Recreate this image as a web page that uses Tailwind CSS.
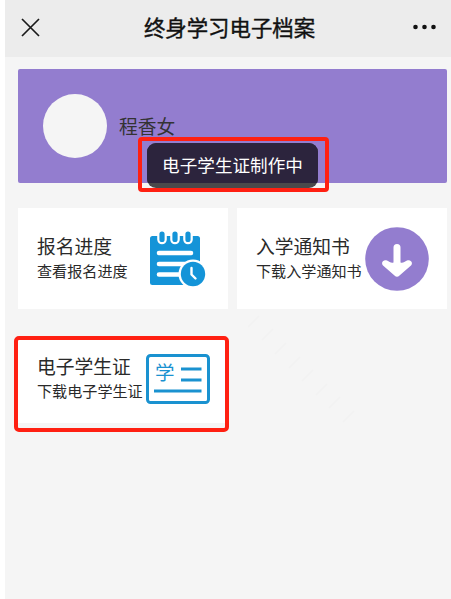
<!DOCTYPE html>
<html lang="zh-CN">
<head>
    <meta charset="UTF-8">
    <meta name="viewport" content="width=device-width, initial-scale=1.0">
    <title>终身学习电子档案</title>
    <script src="https://cdn.jsdelivr.net/npm/@tailwindcss/browser@4"></script>
</head>
<body class="bg-white pl-[5px] h-[599px] overflow-hidden font-['Noto_Sans_CJK_SC',sans-serif] text-[#2a2a2a]">
    <div class="relative h-[599px] bg-[#f5f5f5]">

        <!-- Title bar -->
        <header class="h-[57px] bg-[#ececec] flex items-center justify-between pl-[16px] pr-[15px] pb-[3px]">
            <svg class="w-[19px] h-[19px]" viewBox="0 0 19 19" fill="none" stroke="#1a1a1a" stroke-width="1.7">
                <path d="M1 1L18 18M18 1L1 18"/>
            </svg>
            <h1 class="pl-[6px] text-[21.4px] leading-[30px] font-normal text-[#111] whitespace-nowrap [-webkit-text-stroke:0.4px_#111]">终身学习电子档案</h1>
            <svg class="w-[23px] h-[6px]" viewBox="0 0 23 6" fill="#111">
                <circle cx="2.5" cy="3" r="2.3"/>
                <circle cx="11.5" cy="3" r="2.3"/>
                <circle cx="20.5" cy="3" r="2.3"/>
            </svg>
        </header>

        <main class="pl-[13px] pr-[4px] pt-[12px]">
            <!-- Profile -->
            <section class="h-[114px] rounded-[2px] bg-[#937dcf] flex items-center pl-[25px] gap-[12px]">
                <div class="w-[64px] h-[64px] rounded-full bg-[#f5f5f5]"></div>
                <p class="text-[18.8px] leading-[28px] text-[#333]">程香女</p>
            </section>

            <!-- Menu cards -->
            <section class="mt-[25px] grid grid-cols-[210px_210px] justify-between">
                <a href="#" class="h-[101px] bg-white flex pl-[19px]">
                    <div class="w-[113px] pt-[24px] whitespace-nowrap">
                        <h2 class="text-[18.8px] leading-[27px]">报名进度</h2>
                        <p class="text-[15.1px] leading-[23px]">查看报名进度</p>
                    </div>
                    <svg class="mt-[23px] w-[56px] h-[56px]" viewBox="0 0 56 56" fill="none">
                        <rect y="5" width="50" height="49" rx="2.5" fill="#1494d8"/>
                        <path d="M12 4.5V8.5M25 4.5V8.5M38 4.5V8.5" stroke="#fff" stroke-width="9.6" stroke-linecap="round"/>
                        <path d="M12 3V8.5M25 3V8.5M38 3V8.5" stroke="#1494d8" stroke-width="5.2" stroke-linecap="round"/>
                        <path d="M9 22H41M9 33H41M9 43.5H34" stroke="#fff" stroke-width="4.6" stroke-linecap="round"/>
                        <circle cx="43" cy="43" r="14.5" fill="#fff"/>
                        <circle cx="43" cy="43" r="12.2" fill="#1494d8"/>
                        <path d="M41.5 37V43.5L45.5 47.5" stroke="#fff" stroke-width="2.4" stroke-linecap="round" stroke-linejoin="round"/>
                    </svg>
                </a>
                <a href="#" class="h-[101px] bg-white flex pl-[19px]">
                    <div class="w-[109px] pt-[24px] whitespace-nowrap">
                        <h2 class="text-[18.8px] leading-[27px]">入学通知书</h2>
                        <p class="text-[15.1px] leading-[23px]">下载入学通知书</p>
                    </div>
                    <svg class="mt-[19px] w-[64px] h-[64px]" viewBox="0 0 64 64">
                        <circle cx="32" cy="32" r="31.8" fill="#937dcf"/>
                        <path d="M28.5 20.5a3.5 3.5 0 0 1 7 0V35.5C38 36.5 39.500 34.5 42 33.5C45.5 32 48.500 35.5 46 38.5L34.500 48.5Q32 51 29.500 48.5L18 38.5C15.500 35.5 18.500 32 22 33.5C24.500 34.5 26 36.5 28.500 35.5Z" fill="#fff"/>
                    </svg>
                </a>
                <a href="#" class="mt-[28px] h-[86px] bg-white flex pl-[19px]">
                    <div class="w-[109px] pt-[15px] whitespace-nowrap">
                        <h2 class="text-[18.8px] leading-[27px]">电子学生证</h2>
                        <p class="text-[15.1px] leading-[23px]">下载电子学生证</p>
                    </div>
                    <svg class="mt-[17px] w-[64px] h-[50px] shrink-0" viewBox="0 0 64 50" fill="none" stroke="#1a92d0">
                        <rect x="1.5" y="1.5" width="61" height="47" rx="3" stroke-width="3"/>
                        <text x="9" y="25.5" font-size="19.5" fill="#1a92d0" stroke="none">学</text>
                        <path d="M35 15H55.5M35 26H55.5M8 37H55.5" stroke-width="3"/>
                    </svg>
                </a>
            </section>
        </main>

        <!-- Faint diagonal watermark -->
        <svg class="absolute left-[243px] top-[314px] w-[110px] h-[110px]" viewBox="0 0 110 110" stroke="#f2f2f2" stroke-width="1.5">
            <path d="M0 13L11 2M14 26L25 15M27 40L38 29M41 54L52 43M54 67L65 56M68 81L79 70M81 94L92 83M95 108L106 97"/>
        </svg>

        <!-- Toast -->
        <div class="absolute left-[142px] top-[143px] w-[171px] h-[45px] rounded-[9px] bg-[#4a494b] overflow-hidden">
            <div class="h-[40px] bg-[#2c243d]"></div>
            <p class="absolute inset-0 text-center text-[17.6px] leading-[44px] text-white whitespace-nowrap">电子学生证制作中</p>
        </div>

        <!-- Highlight boxes -->
        <div class="absolute left-[133px] top-[137px] w-[191px] h-[55px] rounded-[4px] border-4 border-[#ff2012]"></div>
        <div class="absolute left-[9px] top-[336px] w-[215px] h-[96px] rounded-[5px] border-4 border-[#ff2012]"></div>
    </div>
</body>
</html>
